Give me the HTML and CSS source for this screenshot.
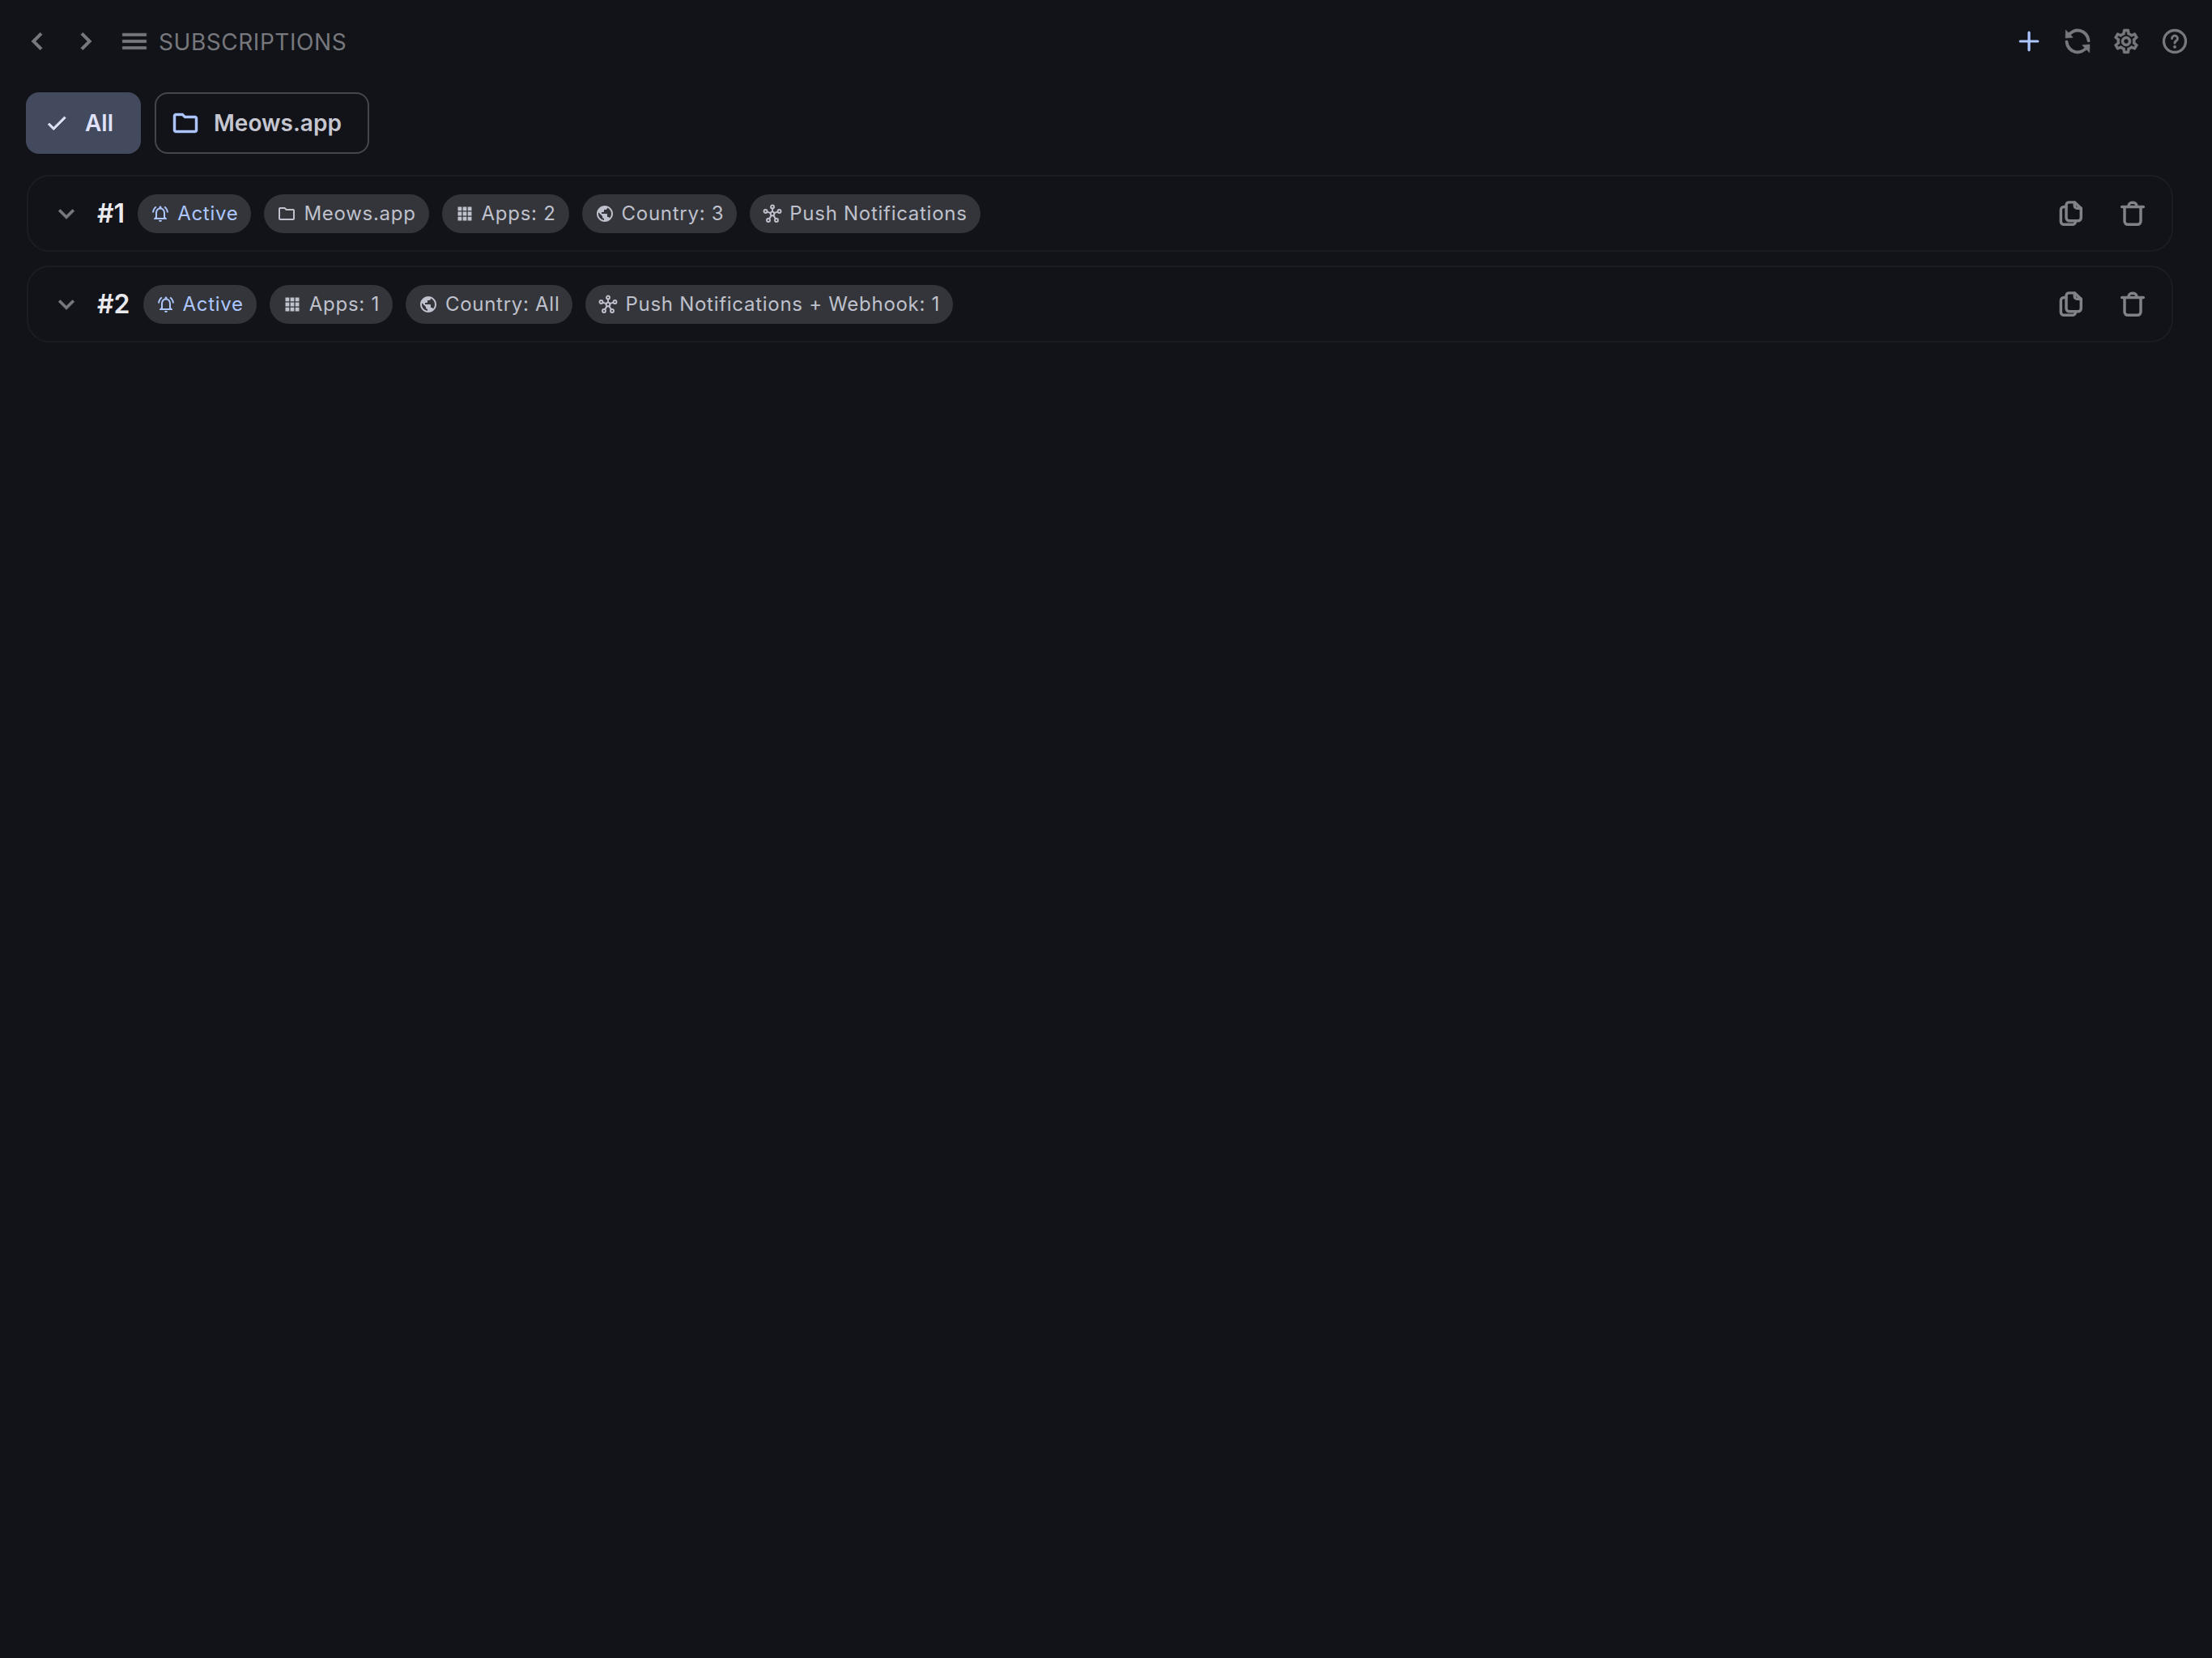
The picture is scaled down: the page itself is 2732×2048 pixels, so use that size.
FILE: index.html
```html
<!DOCTYPE html>
<html lang="en">
<head>
  <meta charset="UTF-8">
  <meta name="viewport" content="width=device-width, initial-scale=1.0">
  <title>Subscriptions</title>
  <link rel="stylesheet" href="styles.css">
</head>
<body>
  <svg class="sprite" width="0" height="0" aria-hidden="true">
    <defs>
      <symbol id="i-back" viewBox="2 2 20 20"><path d="M15.41 7.41 14 6l-6 6 6 6 1.41-1.41L10.83 12z"/></symbol>
      <symbol id="i-forward" viewBox="2 2 20 20"><path d="M10 6 8.59 7.41 13.17 12l-4.58 4.59L10 18l6-6z"/></symbol>
      <symbol id="i-menu" viewBox="1 1 22 22"><path d="M3 18h18v-2H3v2zm0-5h18v-2H3v2zm0-7v2h18V6H3z"/></symbol>
      <symbol id="i-add" viewBox="2 2 20 20"><path class="line plus" d="M12 6v12M6 12h12"/></symbol>
      <symbol id="i-refresh" viewBox="0 0 24 24">
        <path class="line" d="M4.200 7.600A9 9 0 0 1 21 11.500M19.800 16.400A9 9 0 0 1 3 12.500"/>
        <path d="M2.200 2.600 8.200 8.800 2 9.400zM21.800 21.400 15.800 15.200 22 14.600z"/>
      </symbol>
      <symbol id="i-gear" viewBox="0 0 24 24"><path d="M19.43 12.98c.04-.32.07-.64.07-.98 0-.34-.03-.66-.07-.98l2.11-1.65c.19-.15.24-.42.12-.64l-2-3.46c-.09-.16-.26-.25-.44-.25-.06 0-.12.01-.17.03l-2.49 1c-.52-.4-1.08-.73-1.69-.98l-.38-2.65C14.46 2.18 14.25 2 14 2h-4c-.25 0-.46.18-.49.42l-.38 2.65c-.61.25-1.17.59-1.69.98l-2.49-1c-.06-.02-.12-.03-.18-.03-.17 0-.34.09-.43.25l-2 3.46c-.13.22-.07.49.12.64l2.11 1.65c-.04.32-.07.65-.07.98 0 .33.03.66.07.98l-2.11 1.65c-.19.15-.24.42-.12.64l2 3.46c.09.16.26.25.44.25.06 0 .12-.01.17-.03l2.49-1c.52.4 1.08.73 1.69.98l.38 2.65c.03.24.24.42.49.42h4c.25 0 .46-.18.49-.42l.38-2.65c.61-.25 1.17-.59 1.69-.98l2.49 1c.06.02.12.03.18.03.17 0 .34-.09.43-.25l2-3.46c.12-.22.07-.49-.12-.64l-2.11-1.65zm-1.98-1.71c.04.31.05.52.05.73 0 .21-.02.43-.05.73l-.14 1.13.89.7 1.08.84-.7 1.21-1.27-.51-1.04-.42-.9.68c-.43.32-.84.56-1.25.73l-1.06.43-.16 1.13-.2 1.35h-1.4l-.19-1.35-.16-1.13-1.06-.43c-.43-.18-.83-.41-1.23-.71l-.91-.7-1.06.43-1.27.51-.7-1.21 1.08-.84.89-.7-.14-1.13c-.03-.31-.05-.54-.05-.74s.02-.43.05-.73l.14-1.13-.89-.7-1.08-.84.7-1.21 1.27.51 1.04.42.9-.68c.43-.32.84-.56 1.25-.73l1.06-.43.16-1.13.2-1.35h1.39l.19 1.35.16 1.13 1.06.43c.43.18.83.41 1.23.71l.91.7 1.06-.43 1.27-.51.7 1.21-1.07.85-.89.7.14 1.13zM12 8c-2.21 0-4 1.79-4 4s1.79 4 4 4 4-1.79 4-4-1.79-4-4-4zm0 6c-1.1 0-2-.9-2-2s.9-2 2-2 2 .9 2 2-.9 2-2 2z"/></symbol>
      <symbol id="i-help" viewBox="0 0 24 24">
        <circle class="line help-ring" cx="12" cy="12" r="9"/>
        <path class="line help-mark" d="M9.700 9.600a2.300 2.300 0 1 1 3.500 2c-.8.5-1.200 1-1.200 1.800"/>
        <circle cx="12" cy="16.600" r="1.150"/>
      </symbol>
      <symbol id="i-check" viewBox="0 0 24 24"><path d="M9 16.170 4.830 12l-1.420 1.410L9 19 21 7l-1.410-1.410z"/></symbol>
      <symbol id="i-folder" viewBox="0 0 24 24"><path d="M20 6h-8l-2-2H4c-1.100 0-1.990.9-1.990 2L2 18c0 1.100.9 2 2 2h16c1.100 0 2-.9 2-2V8c0-1.100-.9-2-2-2zm0 12H4V6h5.170l2 2H20v10z"/></symbol>
      <symbol id="i-expand" viewBox="1 1 22 22"><path d="M16.590 8.590 12 13.170 7.410 8.590 6 10l6 6 6-6z"/></symbol>
      <symbol id="i-bell" viewBox="0 0 24 24"><path d="M7.580 4.080 6.150 2.650C3.750 4.480 2.170 7.300 2.030 10.500h2c.15-2.650 1.510-4.970 3.550-6.420zm12.390 6.420h2c-.15-3.200-1.730-6.020-4.120-7.850l-1.420 1.430c2.020 1.450 3.390 3.770 3.540 6.420zM18 11c0-3.070-1.640-5.640-4.500-6.320V4c0-.83-.67-1.500-1.500-1.500s-1.500.67-1.500 1.500v.68C7.630 5.360 6 7.920 6 11v5l-2 2v1h16v-1l-2-2v-5zm-2 6H8v-6c0-2.480 1.510-4.500 4-4.500s4 2.020 4 4.500v6zm-4 5c.14 0 .27-.01.4-.04.65-.14 1.180-.58 1.440-1.180.1-.24.15-.5.15-.78h-4c.01 1.100.9 2 2.010 2z"/></symbol>
      <symbol id="i-apps" viewBox="0 0 24 24"><path d="M3.500 8.300h4.800V3.500H3.500zM9.600 8.300h4.800V3.500H9.600zM15.700 8.300h4.800V3.500h-4.800zM3.500 14.400h4.800V9.600H3.500zM9.600 14.400h4.800V9.600H9.600zM15.700 14.400h4.800V9.600h-4.800zM3.500 20.500h4.800v-4.800H3.500zM9.600 20.500h4.800v-4.800H9.600zM15.700 20.500h4.800v-4.800h-4.800z"/></symbol>
      <symbol id="i-globe" viewBox="0 0 24 24"><path d="M12 2C6.480 2 2 6.480 2 12s4.480 10 10 10 10-4.480 10-10S17.520 2 12 2zm-1 17.930c-3.950-.49-7-3.850-7-7.930 0-.62.08-1.210.21-1.790L9 15v1c0 1.100.9 2 2 2v1.930zm6.900-2.540c-.26-.81-1-1.390-1.900-1.390h-1v-3c0-.55-.45-1-1-1H8v-2h2c.55 0 1-.45 1-1V7h2c1.100 0 2-.9 2-2v-.41c2.930 1.190 5 4.060 5 7.410 0 2.080-.8 3.970-2.100 5.390z"/></symbol>
      <symbol id="i-hub" viewBox="0 0 24 24">
        <g class="line thin">
          <path d="M12 5.200v4.300M5.600 9.700l4.100 1.400M18.400 9.700l-4.100 1.400M8.100 18.100l2.500-3.700M15.900 18.100l-2.500-3.700"/>
          <circle cx="12" cy="3.500" r="2"/><circle cx="3.500" cy="9" r="2"/><circle cx="20.500" cy="9" r="2"/>
          <circle cx="7" cy="20" r="2"/><circle cx="17" cy="20" r="2"/><circle cx="12" cy="12" r="2.400"/>
        </g>
      </symbol>
      <symbol id="i-copy" viewBox="0 0 24 24">
        <g class="line">
          <path d="M7.500 3.600A2.600 2.600 0 0 1 10 1.400h5.200l6 5.600v8.800a2.800 2.800 0 0 1-2.800 2.800H10.300a2.800 2.800 0 0 1-2.800-2.800z"/>
          <path d="M15.200 1.400v3.200a2.400 2.400 0 0 0 2.400 2.400h3.600"/>
          <path d="M7.500 5.600H5.300A2.800 2.800 0 0 0 2.500 8.400v10.800A2.800 2.800 0 0 0 5.300 22h8a2.800 2.800 0 0 0 2.800-2.800v-.6"/>
        </g>
      </symbol>
      <symbol id="i-trash" viewBox="0 0 24 24">
        <g class="line">
          <path d="M2 5.700h20M4.500 5.700v13.300A3 3 0 0 0 7.500 22h9a3 3 0 0 0 3-3V5.700M8.300 5.500V4.700A3 3 0 0 1 11.300 1.700h1.400a3 3 0 0 1 3 3v.8"/>
        </g>
      </symbol>
    </defs>
  </svg>

  <header class="topbar">
    <button class="icon-btn"><svg class="icon"><use href="#i-back"/></svg></button>
    <button class="icon-btn"><svg class="icon"><use href="#i-forward"/></svg></button>
    <svg class="icon"><use href="#i-menu"/></svg>
    <h1 class="page-title">SUBSCRIPTIONS</h1>
    <div class="topbar-actions">
      <button class="icon-btn primary"><svg class="icon"><use href="#i-add"/></svg></button>
      <button class="icon-btn"><svg class="icon"><use href="#i-refresh"/></svg></button>
      <button class="icon-btn"><svg class="icon"><use href="#i-gear"/></svg></button>
      <button class="icon-btn"><svg class="icon"><use href="#i-help"/></svg></button>
    </div>
  </header>

  <div class="filters">
    <button class="chip selected"><svg class="chip-icon"><use href="#i-check"/></svg>All</button>
    <button class="chip"><svg class="chip-icon"><use href="#i-folder"/></svg>Meows.app</button>
  </div>

  <main class="sub-list">
    <section class="sub-row">
      <svg class="icon expand"><use href="#i-expand"/></svg>
      <span class="sub-num">#1</span>
      <span class="pill active"><svg class="pill-icon"><use href="#i-bell"/></svg>Active</span>
      <span class="pill"><svg class="pill-icon"><use href="#i-folder"/></svg>Meows.app</span>
      <span class="pill"><svg class="pill-icon"><use href="#i-apps"/></svg>Apps: 2</span>
      <span class="pill"><svg class="pill-icon"><use href="#i-globe"/></svg>Country: 3</span>
      <span class="pill"><svg class="pill-icon"><use href="#i-hub"/></svg>Push Notifications</span>
      <div class="row-actions">
        <svg class="icon small"><use href="#i-copy"/></svg>
        <svg class="icon small"><use href="#i-trash"/></svg>
      </div>
    </section>
    <section class="sub-row">
      <svg class="icon expand"><use href="#i-expand"/></svg>
      <span class="sub-num">#2</span>
      <span class="pill active"><svg class="pill-icon"><use href="#i-bell"/></svg>Active</span>
      <span class="pill"><svg class="pill-icon"><use href="#i-apps"/></svg>Apps: 1</span>
      <span class="pill"><svg class="pill-icon"><use href="#i-globe"/></svg>Country: All</span>
      <span class="pill"><svg class="pill-icon"><use href="#i-hub"/></svg>Push Notifications + Webhook: 1</span>
      <div class="row-actions">
        <svg class="icon small"><use href="#i-copy"/></svg>
        <svg class="icon small"><use href="#i-trash"/></svg>
      </div>
    </section>
  </main>
</body>
</html>
```

FILE: styles.css
```css
* {
  box-sizing: border-box;
}
body {
  margin: 0;
  min-height: 2048px;
  background-color: #111318;
  color: #c5c6d0;
  font-family: Inter, "Liberation Sans", sans-serif;
}
button {
  font: inherit;
  color: inherit;
  background: none;
  border: none;
  padding: 0;
}
.sprite {
  position: absolute;
}
.line {
  fill: none;
  stroke: currentColor;
  stroke-width: 2.6;
  stroke-linecap: round;
  stroke-linejoin: round;
}
.line.thin {
  stroke-width: 1.9;
}
.line.plus {
  stroke-width: 1.8;
}
.line.help-ring {
  stroke-width: 2.2;
}
.line.help-mark {
  stroke-width: 2;
}
.icon {
  width: 36px;
  height: 36px;
  flex: none;
  fill: currentColor;
  stroke: currentColor;
  stroke-width: 0.35;
  color: #77787d;
}
.icon.small {
  width: 32px;
  height: 32px;
  color: #818288;
}
.icon.expand {
  margin-right: 4px;
}

.topbar {
  display: flex;
  align-items: center;
  height: 102px;
  padding: 0 28px;
  gap: 24px;
}
.icon-btn {
  display: flex;
  width: 36px;
  height: 36px;
}
.primary .icon {
  color: #adc6ff;
}
.page-title {
  margin: 2px 0 0 -12px;
  font-size: 28px;
  font-weight: 400;
  letter-spacing: 0.55px;
  line-height: 36px;
  color: #77787d;
}
.topbar-actions {
  display: flex;
  gap: 24px;
  margin-left: auto;
}

.filters {
  display: flex;
  gap: 17px;
  padding: 12px 0 0 32px;
}
.chip {
  display: flex;
  align-items: center;
  height: 76px;
  gap: 17px;
  padding: 0 32px 0 18px;
  border: 2px solid #44464e;
  border-radius: 16px;
  font-size: 28px;
  font-weight: 600;
}
.chip.selected {
  gap: 20px;
  padding: 0 32px 0 21px;
  border-color: #434a5e;
  background-color: #434a5e;
  color: #dfe2f9;
}
.chip-icon {
  width: 36px;
  height: 36px;
  flex: none;
  fill: #adc6ff;
  stroke: #adc6ff;
  stroke-width: 0.3;
}
.chip.selected .chip-icon {
  width: 30px;
  height: 30px;
  fill: #dfe2f9;
  stroke: #dfe2f9;
  stroke-width: 0.6;
}

.sub-list {
  display: flex;
  flex-direction: column;
  gap: 17px;
  padding: 26px 48px 0 33px;
}
.sub-row {
  display: flex;
  align-items: center;
  height: 95px;
  gap: 16px;
  padding: 0 32px 0 29px;
  border: 2px solid #1b1d22;
  border-radius: 28px;
}
.sub-num {
  font-size: 32px;
  font-weight: 600;
  color: #e9e9ee;
}
.pill {
  display: flex;
  align-items: center;
  height: 48px;
  gap: 9px;
  padding: 0 16px;
  border-radius: 24px;
  background-color: #33353a;
  color: #bfc1cc;
  font-size: 24px;
  letter-spacing: 0.72px;
}
.pill.active {
  color: #adc6ff;
}
.pill-icon {
  width: 24px;
  height: 24px;
  flex: none;
  fill: currentColor;
}
.row-actions {
  display: flex;
  gap: 44px;
  margin-left: auto;
}
```
